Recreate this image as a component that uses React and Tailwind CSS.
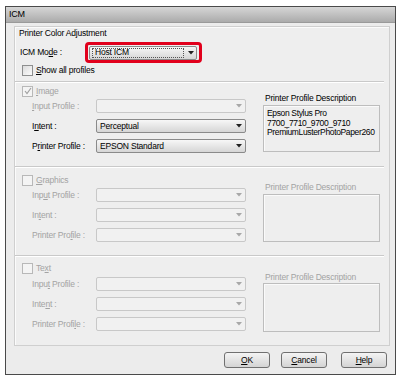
import React from 'react';

const font = { fontFamily: '"Liberation Sans", Arial, sans-serif' };

function U({ children }) {
  return <span className="underline underline-offset-[1px]">{children}</span>;
}

function Arrow({ enabled }) {
  return (
    <svg width="6" height="4" viewBox="0 0 6 4">
      <path d="M0 0 L6 0 L3 3.5 Z" fill={enabled ? '#222' : '#a8a8a8'} />
    </svg>
  );
}

function Select({ value, enabled }) {
  return (
    <div
      className={
        enabled
          ? 'w-[150px] h-[14px] flex items-center rounded-[2px] border border-[#8a8a8a] bg-gradient-to-b from-[#f7f7f7] to-[#d6d6d6]'
          : 'w-[150px] h-[14px] flex items-center rounded-[2px] border border-[#c8c8c8] bg-[#f1f1f1]'
      }
    >
      <span className="flex-1 pl-[3px] text-black">{value}</span>
      <span className="w-[12px] flex justify-center">
        <Arrow enabled={enabled} />
      </span>
    </div>
  );
}

function Check({ checked, enabled }) {
  return (
    <div
      className={
        enabled
          ? 'w-[11px] h-[11px] border border-[#8e8f8f] bg-gradient-to-br from-[#dcdcdc] to-[#fbfbfb] flex items-center justify-center'
          : 'w-[11px] h-[11px] border border-[#b8b8b8] bg-[#f4f4f4] flex items-center justify-center'
      }
    >
      {checked && (
        <svg width="8" height="8" viewBox="0 0 8 8">
          <path d="M1 4 L3 6.5 L7 1" stroke="#a0a0a0" strokeWidth="1.2" fill="none" />
        </svg>
      )}
    </div>
  );
}

function Separator() {
  return <div className="mr-[5px] h-[2px] border-t border-[#c9c9c9] border-b border-b-white" />;
}

function Row({ label, children, enabled, mt }) {
  return (
    <div className={`flex items-center h-[14px] ${mt}`}>
      <span className={enabled ? 'w-[81px] pl-[17px] text-black' : 'w-[81px] pl-[17px] text-[#a3a3a3]'}>{label}</span>
      {children}
    </div>
  );
}

function Section({ name, checked, enabled, values, labels, desc, cfg }) {
  return (
    <div className={`flex ${cfg.h}`}>
      <div className="w-[248px]">
        <div className={`flex items-center h-[12px] pl-[7px] gap-[3px] ${cfg.cb}`}>
          <Check checked={checked} enabled={false} />
          <span className="text-[#a3a3a3]">{name}</span>
        </div>
        <Row label={labels[0]} enabled={false} mt={cfg.dd}>
          <Select value="" enabled={false} />
        </Row>
        <Row label={labels[1]} enabled={enabled} mt="mt-[6px]">
          <Select value={values[0]} enabled={enabled} />
        </Row>
        <Row label={labels[2]} enabled={enabled} mt="mt-[6px]">
          <Select value={values[1]} enabled={enabled} />
        </Row>
      </div>
      <div>
        <div className={`h-[12px] flex items-center pl-[2px] ${cfg.lb} ${enabled ? 'text-black' : 'text-[#a3a3a3]'}`}>
          Printer Profile Description
        </div>
        <div className={`w-[117px] ${cfg.bx} border border-[#bdbdbd] shadow-[inset_1px_1px_0_#fafafa] pl-[3px] pt-[3px] leading-[9.5px] tracking-[-0.35px] text-black`}>
          {desc.map((d) => (
            <div key={d}>{d}</div>
          ))}
        </div>
      </div>
    </div>
  );
}

export default function App() {
  return (
    <div className="w-[398px] h-[376px] bg-white overflow-hidden text-[8.5px] tracking-[-0.2px]" style={font}>
      <div className="ml-[5px] mt-[6px] w-[391px] h-[369px] border border-[#4a4a4a] flex flex-col bg-[#ececec]">
        {/* title bar */}
        <div className="h-[16px] bg-gradient-to-b from-[#d6d6d6] to-[#ababab] border-b border-[#9a9a9a] flex items-center pl-[3px] text-[9px] text-black">
          ICM
        </div>

        <div className="flex-1 pl-[8px] pr-[5px] pt-[3px]">
          {/* group frame */}
          <div className="h-[320px] border border-[#cfcfcf] shadow-[inset_1px_1px_0_#fbfbfb] bg-[#eeeeee]">
            <div className="h-[12px] flex items-center pl-[4px] text-black">Printer Color Adjustment</div>

            <div className="flex items-center mt-[3px] h-[21px]">
              <span className="w-[70px] pl-[5px] text-black">
                ICM Mo<U>d</U>e :
              </span>
              <div className="w-[117px] h-[21px] border-[3px] border-[#e1001c] rounded-[4px] flex items-center pl-[1px]">
                <div className="w-[108px] h-[14px] flex items-center rounded-[2px] border border-[#8a8a8a] bg-gradient-to-b from-[#f7f7f7] to-[#d6d6d6]">
                  <span className="flex-1 ml-[2px] mr-[2px] h-[10px] flex items-center border border-dotted border-[#555] pl-[2px]">
                    Host ICM
                  </span>
                  <span className="w-[10px] flex justify-center">
                    <Arrow enabled />
                  </span>
                </div>
              </div>
            </div>

            <div className="flex items-center gap-[3px] mt-[2px] pl-[7px] h-[11px]">
              <Check enabled />
              <span className="text-black">
                <U>S</U>how all profiles
              </span>
            </div>

            <div className="mt-[5px]">
              <Separator />
            </div>

            <Section
              name={<><U>I</U>mage</>}
              checked
              enabled
              values={['Perceptual', 'EPSON Standard']}
              labels={[
                <><U>I</U>nput Profile :</>,
                <>I<U>n</U>tent :</>,
                <>P<U>r</U>inter Profile :</>,
              ]}
              desc={['Epson Stylus Pro', '7700_7710_9700_9710', 'PremiumLusterPhotoPaper260']}
              cfg={{ h: 'h-[83px]', cb: 'mt-[2px]', dd: 'mt-[2px]', lb: 'mt-[9px]', bx: 'mt-[1px] h-[47px]' }}
            />
            <Separator />
            <Section
              name={<><U>G</U>raphics</>}
              enabled={false}
              values={['', '']}
              labels={[
                <>Inp<U>u</U>t Profile :</>,
                <>In<U>t</U>ent :</>,
                <>Printer Pro<U>f</U>ile :</>,
              ]}
              desc={[]}
              cfg={{ h: 'h-[87px]', cb: 'mt-[6px]', dd: 'mt-[2px]', lb: 'mt-[13px]', bx: 'mt-[1px] h-[48px]' }}
            />
            <Separator />
            <Section
              name={<>Te<U>x</U>t</>}
              enabled={false}
              values={['', '']}
              labels={[
                <>Inpu<U>t</U> Profile :</>,
                <>Inte<U>n</U>t :</>,
                <>Printer Profi<U>l</U>e :</>,
              ]}
              desc={[]}
              cfg={{ h: 'h-[80px]', cb: 'mt-[5px]', dd: 'mt-[3px]', lb: 'mt-[14px]', bx: 'h-[49px]' }}
            />
          </div>

          {/* buttons */}
          <div className="flex justify-end mt-[6px] pr-[3px]">
            <button className="w-[46px] h-[16px] flex items-center justify-center rounded-[3px] border border-[#707070] bg-gradient-to-b from-[#f4f4f4] to-[#d4d4d4] text-black">
              <span><U>O</U>K</span>
            </button>
            <button className="ml-[11px] w-[46px] h-[16px] flex items-center justify-center rounded-[3px] border border-[#707070] bg-gradient-to-b from-[#f4f4f4] to-[#d4d4d4] text-black">
              <span><U>C</U>ancel</span>
            </button>
            <button className="ml-[14px] w-[46px] h-[16px] flex items-center justify-center rounded-[3px] border border-[#707070] bg-gradient-to-b from-[#f4f4f4] to-[#d4d4d4] text-black">
              <span><U>H</U>elp</span>
            </button>
          </div>
        </div>
      </div>
    </div>
  );
}
